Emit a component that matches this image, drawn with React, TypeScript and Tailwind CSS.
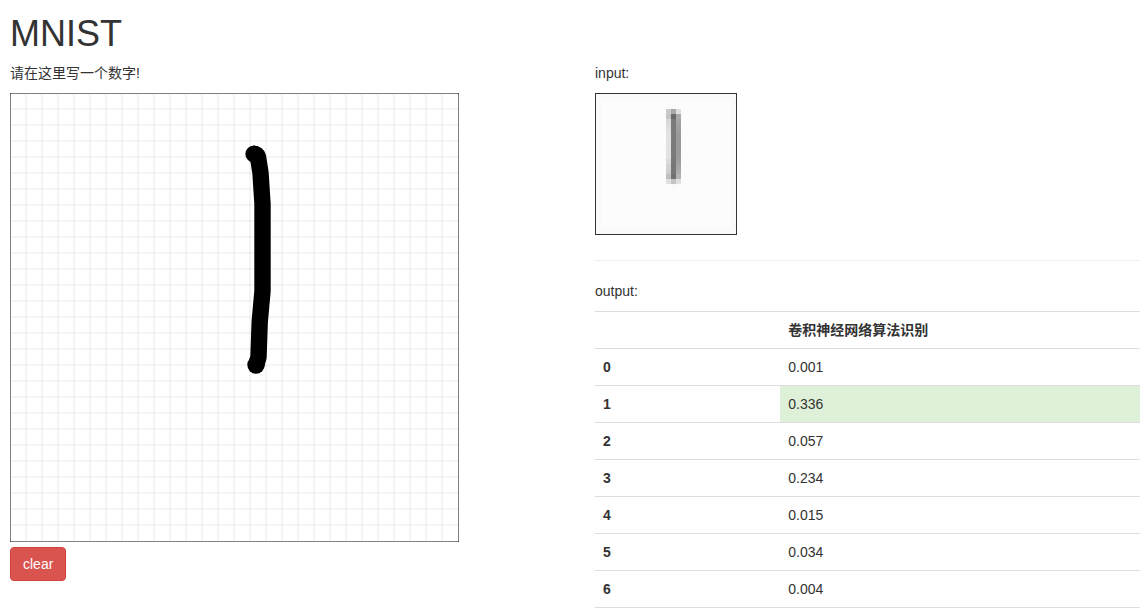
import React from "react";

const GRID_LINES = Array.from({ length: 27 }, (_, i) => (i + 1) * 16);

const PREVIEW_ROWS: string[][] = [
  ["#fbfbfb", "#f9f9f9", "#fbfbfb"],
  ["#cacaca", "#a9a9a9", "#dedede"],
  ["#c4c4c4", "#6a6a6a", "#aaaaaa"],
  ["#d9d9d9", "#7a7a7a", "#a4a4a4"],
  ["#dddddd", "#7b7b7b", "#a0a0a0"],
  ["#e1e1e1", "#7b7b7b", "#9c9c9c"],
  ["#e2e2e2", "#7b7b7b", "#9a9a9a"],
  ["#e2e2e2", "#7b7b7b", "#999999"],
  ["#e2e2e2", "#7a7a7a", "#999999"],
  ["#e2e2e2", "#7a7a7a", "#999999"],
  ["#e2e2e2", "#797979", "#9a9a9a"],
  ["#dadada", "#787878", "#9f9f9f"],
  ["#d3d3d3", "#777777", "#a6a6a6"],
  ["#cecece", "#757575", "#aaaaaa"],
  ["#c0c0c0", "#707070", "#b3b3b3"],
  ["#e0e0e0", "#c3c3c3", "#e0e0e0"],
  ["#fbfbfb", "#f9f9f9", "#fbfbfb"],
];

const RESULTS = ["0.001", "0.336", "0.057", "0.234", "0.015", "0.034", "0.004"];
const BEST = 1;

function DrawingBoard() {
  return (
    <svg width="449" height="449" className="block" role="img" aria-labelledby="board-label">
      <rect x="0" y="0" width="449" height="449" fill="#fff" stroke="#000" />
      <g stroke="#000" strokeOpacity="0.08">
        {GRID_LINES.map((p) => (
          <React.Fragment key={p}>
            <line x1={p} y1="1" x2={p} y2="448" />
            <line x1="1" y1={p} x2="448" y2={p} />
          </React.Fragment>
        ))}
      </g>
      <path
        d="M244 61 C246 61 247.5 62 248 64 L250.5 80 L252.5 111 L252.5 198 L249.7 229 L248.5 264 L246.5 271"
        fill="none"
        stroke="#000"
        strokeWidth="16.4"
        strokeLinecap="round"
        strokeLinejoin="round"
      />
      <circle cx="244" cy="61" r="8.6" />
      <circle cx="246" cy="272" r="8.7" />
    </svg>
  );
}

function InputPreview() {
  return (
    <svg
      width="142"
      height="142"
      className="block border border-[#333]"
      shapeRendering="crispEdges"
      role="img"
      aria-labelledby="input-label"
    >
      <rect width="140" height="140" fill="#f9f9f9" />
      <rect x="5" y="5" width="130" height="130" fill="#fcfcfc" />
      {PREVIEW_ROWS.map((row, r) =>
        row.map((fill, c) => (
          <rect key={`${r}-${c}`} x={(14 + c) * 5} y={(2 + r) * 5} width="5" height="5" fill={fill} />
        ))
      )}
    </svg>
  );
}

export default function App() {
  return (
    <div className="bg-white pl-2.5 pt-3 font-['Liberation_Sans','Noto_Sans_CJK_SC',sans-serif] text-sm leading-5 text-[#333]">
      <h1 className="mb-2 text-4xl leading-[43px] font-medium">MNIST</h1>
      <main className="grid grid-cols-[585px_minmax(0,1fr)]">
        <section>
          <p id="board-label" className="mb-2.5">请在这里写一个数字!</p>
          <DrawingBoard />
          <button
            type="button"
            className="mt-[5px] block cursor-pointer rounded border border-[#d43f3a] bg-[#d9534f] px-3 py-1.5 text-white"
          >
            clear
          </button>
        </section>
        <section>
          <p id="input-label" className="mb-2.5">input:</p>
          <InputPreview />
          <hr className="mt-[25px] mb-5 border-[#eee]" />
          <p id="output-label" className="mb-2.5">output:</p>
          <table
            aria-labelledby="output-label"
            className="w-full table-fixed border-separate border-spacing-0 border-b border-[#ddd] text-left"
          >
            <thead>
              <tr>
                <td className="w-[34%] border-t border-[#ddd] p-2" />
                <th scope="col" className="border-t border-[#ddd] p-2 font-bold">卷积神经网络算法识别</th>
              </tr>
            </thead>
            <tbody>
              {RESULTS.map((value, digit) => (
                <tr key={digit}>
                  <th scope="row" className="border-t border-[#ddd] p-2 font-bold">{digit}</th>
                  <td className={digit === BEST ? "border-t border-[#ddd] bg-[#dff0d8] p-2" : "border-t border-[#ddd] p-2"}>
                    {value}
                  </td>
                </tr>
              ))}
            </tbody>
          </table>
        </section>
      </main>
    </div>
  );
}
